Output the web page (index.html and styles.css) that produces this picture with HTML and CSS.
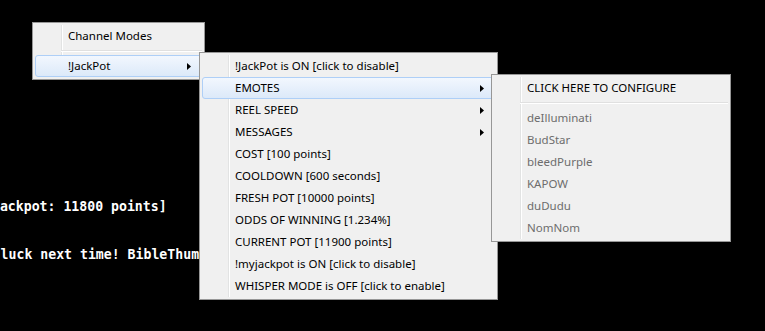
FILE: index.html
```html
<!DOCTYPE html>
<html>
<head>
<meta charset="utf-8">
<link rel="stylesheet" href="styles.css">
</head>
<body>
<div class="console">
  <div class="line line1">[Jackpot: 11800 points]</div>
  <div class="line line2">Better luck next time! BibleThump</div>
</div>

<div class="menu menu1">
  <div class="item"><span class="label">Channel Modes</span></div>
  <div class="sep"></div>
  <div class="item hot"><span class="label">!JackPot</span><svg class="arrow" width="4" height="7" viewBox="0 0 4 7"><path d="M0 0 L4 3.5 L0 7 Z"/></svg></div>
</div>

<div class="menu menu2">
  <div class="item"><span class="label">!JackPot is ON [click to disable]</span></div>
  <div class="item hot"><span class="label">EMOTES</span><svg class="arrow" width="4" height="7" viewBox="0 0 4 7"><path d="M0 0 L4 3.5 L0 7 Z"/></svg></div>
  <div class="item"><span class="label">REEL SPEED</span><svg class="arrow" width="4" height="7" viewBox="0 0 4 7"><path d="M0 0 L4 3.5 L0 7 Z"/></svg></div>
  <div class="item"><span class="label">MESSAGES</span><svg class="arrow" width="4" height="7" viewBox="0 0 4 7"><path d="M0 0 L4 3.5 L0 7 Z"/></svg></div>
  <div class="item"><span class="label">COST [100 points]</span></div>
  <div class="item"><span class="label">COOLDOWN [600 seconds]</span></div>
  <div class="item"><span class="label">FRESH POT [10000 points]</span></div>
  <div class="item"><span class="label">ODDS OF WINNING [1.234%]</span></div>
  <div class="item"><span class="label">CURRENT POT [11900 points]</span></div>
  <div class="item"><span class="label">!myjackpot is ON [click to disable]</span></div>
  <div class="item"><span class="label">WHISPER MODE is OFF [click to enable]</span></div>
</div>

<div class="menu menu3">
  <div class="item"><span class="label">CLICK HERE TO CONFIGURE</span></div>
  <div class="sep"></div>
  <div class="item disabled"><span class="label">deIlluminati</span></div>
  <div class="item disabled"><span class="label">BudStar</span></div>
  <div class="item disabled"><span class="label">bleedPurple</span></div>
  <div class="item disabled"><span class="label">KAPOW</span></div>
  <div class="item disabled"><span class="label">duDudu</span></div>
  <div class="item disabled"><span class="label">NomNom</span></div>
</div>
</body>
</html>
```

FILE: styles.css
```css
html, body {
  margin: 0;
  padding: 0;
  background: #000;
  width: 765px;
  height: 331px;
  overflow: hidden;
}

.console {
  padding-top: 198px;
  color: #fff;
  font-family: "DejaVu Sans Mono", "Liberation Mono", monospace;
  font-weight: bold;
  font-size: 13.2px;
  line-height: 18px;
}

.line {
  white-space: pre;
}

.line1 {
  margin-left: -16px;
}

.line2 {
  margin-top: 30px;
  margin-left: -55px;
}

.menu {
  position: absolute;
  box-sizing: border-box;
  background: #f0f0f0;
  border: 1px solid #979797;
  padding: 2px 2px;
  font-family: "Noto Sans", "Open Sans", sans-serif;
  font-size: 11.5px;
  color: #000;
}

.menu::before {
  content: "";
  position: absolute;
  top: 2px;
  bottom: 2px;
  left: 28px;
  width: 1px;
  background: #e2e3e3;
  box-shadow: 1px 0 0 #fff;
}

.menu1 { left: 32px; top: 22px; width: 173px; }
.menu2 { left: 199px; top: 52px; width: 299px; }
.menu3 { left: 491px; top: 74px; width: 240px; }

.item {
  position: relative;
  height: 22px;
  display: flex;
  align-items: center;
  padding-left: 32px;
  padding-right: 10px;
  box-sizing: border-box;
  border: 1px solid transparent;
  border-radius: 3px;
}

.item .label {
  flex: 1;
  line-height: 20px;
}

.item.hot {
  border-color: #aecff7;
  background: linear-gradient(#f2f7fe, #dce9f9);
}

.item.disabled {
  color: #6d6d6d;
}

.arrow {
  fill: #000;
  flex: none;
}

.sep {
  height: 8px;
  margin-left: 26px;
  position: relative;
}

.sep::after {
  content: "";
  position: absolute;
  left: 0;
  right: 0;
  top: 3px;
  height: 1px;
  background: #e0e0e0;
  box-shadow: 0 1px 0 #fff;
}
```
